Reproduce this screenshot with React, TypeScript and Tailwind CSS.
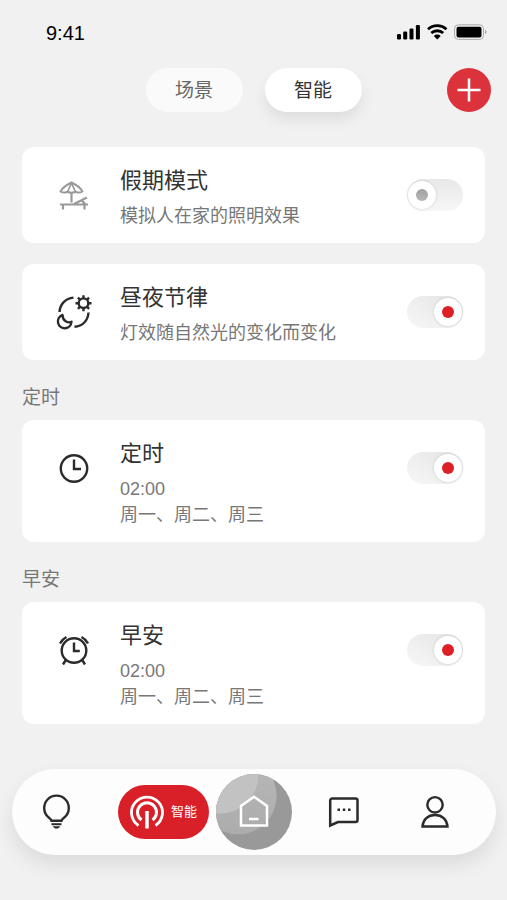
import React, { useState } from 'react';

interface Automation {
  id: string;
  title: string;
  lines: string[];
  icon: React.ReactNode;
}

const iconProps = {
  fill: 'none',
  stroke: 'currentColor',
  strokeWidth: 2.4,
  'aria-hidden': true,
};

const BeachIcon = () => (
  <svg {...iconProps} className="h-9 w-9 text-[#999]" viewBox="0 0 36 36">
    <path d="M4.500 14.500C6.500 10.500 10.500 8 15.500 5.500C20.500 8 24.500 10.500 26.500 14.500Q23 16.500 20 14.800Q15.500 16.500 11 14.800Q8 16.500 4.500 14.500Z" strokeWidth="2" strokeLinejoin="round" />
    <path d="M15.500 6L11.500 15M15.500 6L19.500 15" strokeWidth="1.700" />
    <path d="M15.500 15V25.500" strokeWidth="2.200" />
    <path d="M4 27.500H32M7 27.500V32.500M28.500 27.500V32.500M18 27L31 20.500M26 23.500L29 27" strokeWidth="2.200" />
  </svg>
);

const DayNightIcon = () => (
  <svg {...iconProps} className="h-9 w-9 text-[#2b2b2b]" viewBox="0 0 36 36">
    <path d="M3.500 18C4 10 9.500 4.500 17.500 3.600M32.500 18.500C32 26.500 26.500 32.500 18.500 32.800" />
    <circle cx="27.500" cy="9.200" r="4.800" />
    <path d="M27.500 4.500V1.200M27.500 17.200V14M19.500 9.200H23M32 9.200H35.500M21.900 3.600L24.200 5.900M30.800 12.500L33.100 14.800M33.100 3.600L30.800 5.900M24.200 12.500L21.900 14.800" />
    <path d="M6.500 21A6.800 6.800 0 1 0 15.500 27.800C12 29.500 6.500 27 6.500 21Z" strokeLinejoin="round" />
  </svg>
);

const ClockIcon = () => (
  <svg {...iconProps} className="h-9 w-9 text-[#2b2b2b]" viewBox="0 0 36 36">
    <circle cx="18" cy="18.500" r="13.200" />
    <path d="M18 9.500V19H25" />
  </svg>
);

const AlarmIcon = () => (
  <svg {...iconProps} className="h-9 w-9 text-[#2b2b2b]" viewBox="0 0 36 36">
    <circle cx="18" cy="18.500" r="12.300" />
    <path d="M18 10.500V19H23.800" />
    <path d="M4 11.500C5.500 8.500 7.500 6.500 10.500 5M32 11.500C30.500 8.500 28.500 6.500 25.500 5M9.800 28L7 32.500M26.200 28L29 32.500" />
  </svg>
);

const BulbIcon = () => (
  <svg {...iconProps} className="h-9 w-8" viewBox="0 0 32 36">
    <path d="M11.500 26.800C11.200 25 10.200 24.500 8.500 23.300A12.300 12.300 0 1 1 24.500 23.300C22.800 24.500 21.800 25 21.500 26.800Z" />
    <path d="M11.500 30.200H21.500" strokeWidth="2" />
    <path d="M12.500 32.300H20.500L18 34.500H15Z" fill="currentColor" stroke="none" />
  </svg>
);

const SmartIcon = () => (
  <svg {...iconProps} className="h-9 w-[34px]" viewBox="0 0 34 36">
    <path d="M8.500 31.500A15.500 15.500 0 1 1 25.500 31.500" strokeWidth="2.800" />
    <path d="M11.500 26A9.500 9.500 0 1 1 22.500 26" strokeWidth="3" />
    <path d="M17 17V34.500" strokeWidth="3.500" />
  </svg>
);

const HomeIcon = () => (
  <svg className="h-[76px] w-[76px]" viewBox="0 0 76 76" fill="none" aria-hidden="true">
    <defs>
      <linearGradient id="mid" x1="0" y1="0" x2="0" y2="1">
        <stop offset="0" stopColor="#b8b8b8" />
        <stop offset="1" stopColor="#acacac" />
      </linearGradient>
    </defs>
    <rect width="76" height="76" fill="#999" />
    <circle cx="22.300" cy="22" r="38.300" fill="url(#mid)" />
    <circle cx="4" cy="1.300" r="38.300" fill="#c2c2c2" />
    <path d="M25 51.500V32L38 22.700L51 32V51.500Z" stroke="#fff" strokeWidth="2.500" />
    <path d="M33 45H42.500" stroke="#fff" strokeWidth="2.500" />
  </svg>
);

const ChatIcon = () => (
  <svg {...iconProps} className="h-8 w-8" viewBox="0 0 32 32">
    <path d="M2.200 29.500V4.500A2 2 0 0 1 4.200 2.500H27.500A2 2 0 0 1 29.500 4.500V24A2 2 0 0 1 27.500 26H10Z" strokeWidth="2.500" />
    <path d="M9.500 13.800H12M14.800 13.800H17.300M20 13.800H22.500" strokeWidth="2.400" />
  </svg>
);

const UserIcon = () => (
  <svg {...iconProps} className="h-9 w-8" viewBox="0 0 32 36">
    <circle cx="16" cy="10.800" r="7.700" />
    <path d="M3.500 32.500C4 25.500 9 21 16 21S28 25.500 28.500 32.500Z" />
  </svg>
);

const StatusBar = () => (
  <div className="flex h-16 items-center justify-between pr-5 pl-[46px] text-black">
    <span className="pt-0.5 text-[20px] leading-6">9:41</span>
    <svg className="h-4 w-[90px]" viewBox="0 0 90 16" aria-hidden="true">
      <rect x="0" y="10" width="4" height="5.500" rx="1.200" />
      <rect x="6.200" y="7.500" width="4" height="8" rx="1.200" />
      <rect x="12.500" y="4.500" width="4" height="11" rx="1.200" />
      <rect x="18.900" y="1" width="4" height="14.500" rx="1.200" />
      <path d="M31 5.200A14 14 0 0 1 49.500 5.200M34.300 9A9 9 0 0 1 46.200 9" fill="none" stroke="#000" strokeWidth="2.800" />
      <path d="M40.250 15.500L36.800 12A5 5 0 0 1 43.700 12Z" />
      <rect x="57.500" y="0.800" width="29" height="14.600" rx="4" fill="none" stroke="#aaa" />
      <rect x="59.500" y="2.800" width="25" height="10.600" rx="2" />
      <path d="M88 5.800C90 6.500 90 9.500 88 10.200Z" fill="#aaa" />
    </svg>
  </div>
);

interface SwitchProps {
  label: string;
  checked: boolean;
  onChange: () => void;
}

const Switch: React.FC<SwitchProps> = ({ label, checked, onChange }) => (
  <label
    className={`relative flex h-8 w-14 shrink-0 items-center rounded-full px-px ${
      checked
        ? 'justify-end bg-gradient-to-tr from-[#f7f7f7] to-[#e4e4e4]'
        : 'justify-start bg-gradient-to-t from-[#f7f7f7] to-[#e8e8e8]'
    }`}
  >
    <input
      type="checkbox"
      role="switch"
      aria-label={label}
      checked={checked}
      onChange={onChange}
      className="absolute inset-0 h-full w-full cursor-pointer appearance-none rounded-full"
    />
    <span className="pointer-events-none relative flex h-7 w-7 items-center justify-center rounded-full bg-white shadow-[0_0_3px_rgba(0,0,0,0.16)]">
      <span className={`h-3 w-3 rounded-full ${checked ? 'bg-[#de1f26]' : 'bg-gradient-to-b from-[#a0a0a0] to-[#b8b8b8]'}`} />
    </span>
  </label>
);

const modes: Automation[] = [
  { id: 'holiday', title: '假期模式', lines: ['模拟人在家的照明效果'], icon: <BeachIcon /> },
  { id: 'rhythm', title: '昼夜节律', lines: ['灯效随自然光的变化而变化'], icon: <DayNightIcon /> },
];

const schedules: Automation[] = [
  { id: 'timer', title: '定时', lines: ['02:00', '周一、周二、周三'], icon: <ClockIcon /> },
  { id: 'morning', title: '早安', lines: ['02:00', '周一、周二、周三'], icon: <AlarmIcon /> },
];

const App: React.FC = () => {
  const [tab, setTab] = useState('智能');
  const [enabled, setEnabled] = useState<Record<string, boolean>>({
    holiday: false,
    rhythm: true,
    timer: true,
    morning: true,
  });

  const toggle = (id: string) => {
    setEnabled(prev => ({ ...prev, [id]: !prev[id] }));
  };

  const renderCard = (item: Automation) => (
    <article key={item.id} className="flex items-start rounded-xl bg-white pr-[22px] pl-[34px]">
      <div className="flex h-24 w-16 shrink-0 items-center">{item.icon}</div>
      <div className="min-w-0 flex-1 pt-[19px] pb-[14px]">
        <h3 className="mb-[7px] text-[22px] leading-[30px] text-[#333]">{item.title}</h3>
        {item.lines.map(line => (
          <p key={line} className="text-[18px] leading-[26px] text-[#777]">{line}</p>
        ))}
      </div>
      <div className="flex h-24 items-center">
        <Switch label={item.title} checked={enabled[item.id]} onChange={() => toggle(item.id)} />
      </div>
    </article>
  );

  return (
    <div className="min-h-screen bg-[#f1f1f1] pb-11 font-['Liberation_Sans','Noto_Sans_CJK_SC',sans-serif]">
      <StatusBar />

      <header className="mt-1 grid grid-cols-[1fr_auto_1fr] items-center px-4">
        <div className="col-start-2 flex gap-[22px]">
          {['场景', '智能'].map(name => (
            <button
              key={name}
              type="button"
              onClick={() => setTab(name)}
              className={`h-11 w-[97px] rounded-full pt-0.5 text-[19px] ${
                tab === name ? 'bg-white text-[#333] shadow-[0_8px_14px_rgba(0,0,0,0.08)]' : 'bg-[#fafafa] text-[#666]'
              }`}
            >
              {name}
            </button>
          ))}
        </div>
        <button
          type="button"
          aria-label="添加"
          className="flex h-11 w-11 items-center justify-center justify-self-end rounded-full bg-[#dc323c] text-white"
        >
          <svg className="h-6 w-6" viewBox="0 0 24 24" fill="none" stroke="currentColor" strokeWidth="2.500" aria-hidden="true">
            <path d="M12 0.500V23.500M0.500 12H23.500" />
          </svg>
        </button>
      </header>

      <main className="mt-[35px] px-[22px]">
        <div className="flex flex-col gap-[21px]">{modes.map(renderCard)}</div>
        {schedules.map(item => (
          <section key={item.id}>
            <h2 className="mt-[25px] mb-[9px] text-[19px] leading-[26px] text-[#777]">{item.title}</h2>
            {renderCard(item)}
          </section>
        ))}
      </main>

      <nav className="mr-[11px] ml-3 mt-[45px] flex h-[86px] items-center justify-between rounded-full bg-[#fdfdfd] pr-[22px] pl-[18px] text-[#2b2b2b] shadow-[0_10px_20px_rgba(0,0,0,0.09)]">
        <button type="button" aria-label="灯光" className="flex w-[52px] justify-center">
          <BulbIcon />
        </button>
        <div className="flex items-center gap-[7px]">
          <button
            type="button"
            className="flex h-[54px] w-[91px] items-center justify-center gap-[7px] rounded-full bg-[#d91f27] text-[13px] text-white"
          >
            <SmartIcon />
            智能
          </button>
          <button type="button" aria-label="首页" className="overflow-hidden rounded-full">
            <HomeIcon />
          </button>
        </div>
        <button type="button" aria-label="消息">
          <ChatIcon />
        </button>
        <button type="button" aria-label="我的" className="flex w-[78px] justify-center">
          <UserIcon />
        </button>
      </nav>
    </div>
  );
};

export default App;
